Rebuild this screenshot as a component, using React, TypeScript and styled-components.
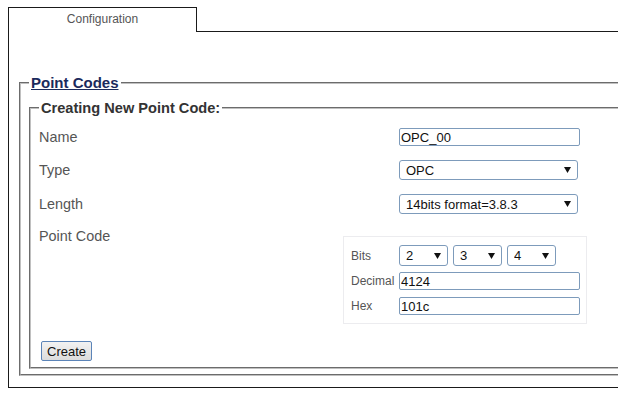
import React from 'react'
import styled, { createGlobalStyle } from 'styled-components'

const GlobalStyle = createGlobalStyle`
  html, body {
    margin: 0;
    padding: 0;
    overflow: hidden;
    background: #fff;
    font-family: "Liberation Sans", Arial, sans-serif;
  }
`;

const Page = styled.div`
  width: 618px;
  box-sizing: border-box;
  overflow: hidden;
  padding: 7px 0 0 8px;
`;

const TabBar = styled.div`
  display: flex;
  height: 25px;
`;

const Tab = styled.div`
  width: 187px;
  height: 24px;
  border: 1px solid #1a1a1a;
  border-bottom: none;
  box-sizing: content-box;
  font-size: 12px;
  color: #555;
  text-align: center;
  line-height: 22px;
`;

const TabFiller = styled.div`
  flex: 1;
  border-bottom: 1px solid #1a1a1a;
`;

// the panel runs on past the right edge of the window, as in the original page
const Panel = styled.div`
  width: calc(100% + 40px);
  border-left: 1px solid #1a1a1a;
  border-bottom: 1px solid #1a1a1a;
  padding: 43px 0 11px 10px;
`;

const Fieldset = styled.fieldset<{ $pt: number; $pb: number }>`
  margin: 0;
  border: 2px groove #c0c0c0;
  padding: ${p => p.$pt}px 0 ${p => p.$pb}px 8px;
  min-width: 0;
`;

const Legend = styled.legend<{ $size: number; $link?: boolean }>`
  padding: 0 2px;
  font-size: ${p => p.$size}px;
  line-height: 16px;
  font-weight: bold;
  color: ${p => (p.$link ? '#1b2a5c' : '#333')};
  text-decoration: ${p => (p.$link ? 'underline' : 'none')};
`;

const Row = styled.div<{ $gap: number; $top?: boolean }>`
  display: flex;
  align-items: ${p => (p.$top ? 'flex-start' : 'center')};
  margin-top: ${p => p.$gap}px;
  min-height: 20px;
`;

const Label = styled.div<{ $w: number }>`
  width: ${p => p.$w}px;
  flex: none;
  font-size: 14.4px;
  line-height: 16px;
  color: #555;
`;

const TextInput = styled.input<{ $w: number }>`
  box-sizing: border-box;
  width: ${p => p.$w}px;
  height: 18px;
  margin: 0;
  padding: 0 1px;
  border: 1px solid #7d9bbb;
  border-radius: 2px;
  font-family: "Liberation Sans", Arial, sans-serif;
  font-size: 13px;
  color: #111;
  outline: none;
`;

const SelectWrap = styled.div`
  position: relative;
  display: inline-block;
`;

const Select = styled.select<{ $w: number; $h: number }>`
  appearance: none;
  -webkit-appearance: none;
  box-sizing: border-box;
  width: ${p => p.$w}px;
  height: ${p => p.$h}px;
  margin: 0;
  padding: 0 0 0 6px;
  border: 1px solid #7d9bbb;
  border-radius: 3px;
  background: #fff;
  font-family: "Liberation Sans", Arial, sans-serif;
  font-size: 13px;
  color: #111;
  outline: none;
`;

const Arrow = styled.svg`
  position: absolute;
  right: 7px;
  top: 50%;
  margin-top: -3px;
  pointer-events: none;
`;

const CodeBox = styled.div`
  margin-top: 8px;
  width: 244px;
  box-sizing: border-box;
  border: 1px solid #ececef;
  padding: 8px 0 8px 7px;
`;

const BoxRow = styled.div<{ $gap: number }>`
  display: flex;
  align-items: center;
  margin-top: ${p => p.$gap}px;
`;

const BoxLabel = styled.div`
  width: 48px;
  flex: none;
  font-size: 12px;
  color: #555;
`;

const Bits = styled.div`
  display: flex;
  gap: 5px;
`;

const Button = styled.button`
  margin-top: 17px;
  margin-left: 2px;
  height: 20px;
  padding: 0 5px;
  border: 1px solid #5b84b8;
  border-radius: 2px;
  background: linear-gradient(#f2f2f2, #dcdcdc);
  font-family: "Liberation Sans", Arial, sans-serif;
  font-size: 13px;
  color: #111;
`;

const Drop = ({ w, h, value, options }: { w: number; h: number; value: string; options: string[] }) => (
  <SelectWrap>
    <Select $w={w} $h={h} defaultValue={value}>
      {options.map(o => (
        <option key={o}>{o}</option>
      ))}
    </Select>
    <Arrow width="7" height="6" viewBox="0 0 7 6">
      <polygon points="0,0 7,0 3.5,6" fill="#111" />
    </Arrow>
  </SelectWrap>
);

const digits = ['0', '1', '2', '3', '4', '5', '6', '7'];

const App = () => {
  return (
    <Page>
      <GlobalStyle />
      <TabBar>
        <Tab>Configuration</Tab>
        <TabFiller />
      </TabBar>
      <Panel>
        <Fieldset $pt={9} $pb={5}>
          <Legend $size={15} $link>Point Codes</Legend>
          <Fieldset $pt={11} $pb={6}>
            <Legend $size={14.6}>Creating New Point Code:</Legend>
            <Row $gap={0}>
              <Label $w={360}>Name</Label>
              <TextInput $w={181} defaultValue="OPC_00" />
            </Row>
            <Row $gap={13}>
              <Label $w={360}>Type</Label>
              <Drop w={179} h={20} value="OPC" options={['OPC', 'DPC']} />
            </Row>
            <Row $gap={14}>
              <Label $w={360}>Length</Label>
              <Drop w={179} h={20} value="14bits format=3.8.3" options={['14bits format=3.8.3', '24bits format=8.8.8']} />
            </Row>
            <Row $gap={14} $top>
              <Label $w={304}>Point Code</Label>
              <CodeBox>
                <BoxRow $gap={0}>
                  <BoxLabel>Bits</BoxLabel>
                  <Bits>
                    <Drop w={49} h={21} value="2" options={digits} />
                    <Drop w={49} h={21} value="3" options={digits} />
                    <Drop w={49} h={21} value="4" options={digits} />
                  </Bits>
                </BoxRow>
                <BoxRow $gap={6}>
                  <BoxLabel>Decimal</BoxLabel>
                  <TextInput $w={181} defaultValue="4124" />
                </BoxRow>
                <BoxRow $gap={7}>
                  <BoxLabel>Hex</BoxLabel>
                  <TextInput $w={181} defaultValue="101c" />
                </BoxRow>
              </CodeBox>
            </Row>
            <Button>Create</Button>
          </Fieldset>
        </Fieldset>
      </Panel>
    </Page>
  )
}
export default App
